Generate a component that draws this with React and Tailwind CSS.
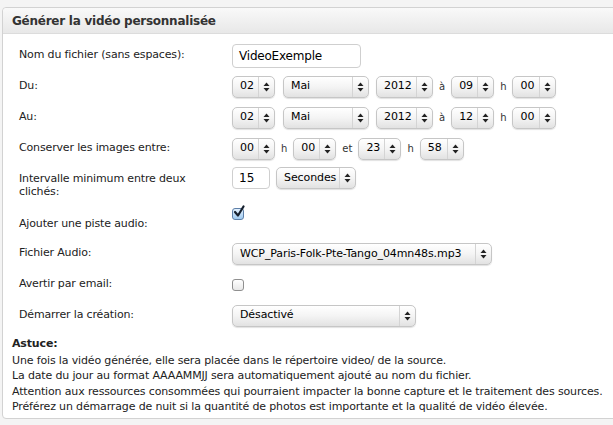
import React from 'react';

const font = { fontFamily: '"DejaVu Sans", "Lucida Grande", sans-serif' };

const Arrows = () => (
    <svg width="7" height="10" viewBox="0 0 7 10">
        <path d="M3.5 0.5 L6.5 4 L0.5 4 Z" fill="#222" />
        <path d="M3.5 9.5 L6.5 6 L0.5 6 Z" fill="#222" />
    </svg>
);

// Mac style popup select
const Select = ({ value, w }) => (
    <div
        className="inline-flex h-[22px] items-center rounded-[5px] border border-[#c6c6c6] bg-gradient-to-b from-white via-[#f4f4f4] to-[#e2e2e2] shadow-[0_1px_1px_rgba(0,0,0,0.12)] shrink-0"
        style={{ width: w }}
    >
        <span className="flex-1 overflow-hidden whitespace-nowrap pl-[7px] text-[11px] tracking-[-0.1px] text-black">{value}</span>
        <span className="flex h-full w-[16px] items-center justify-center border-l border-[#d4d4d4]">
            <Arrows />
        </span>
    </div>
);

const Sep = ({ children }) => <span className="mx-[6px] text-[10px] text-[#333]">{children}</span>;

const Row = ({ label, h, children, labelClass = '', ctrlClass = '' }) => (
    <div className={`flex ${h}`}>
        <div className={`w-[213px] shrink-0 text-[11px] tracking-[-0.15px] text-[#222] ${labelClass}`}>{label}</div>
        <div className={`flex items-center ${ctrlClass}`}>{children}</div>
    </div>
);

const Checkbox = ({ checked }) => (
    <div
        className={`relative h-[12px] w-[12px] rounded-[3px] border ${
            checked
                ? 'border-[#5d7fa8] bg-gradient-to-b from-[#e4f2ff] to-[#9fcaf0]'
                : 'border-[#8f8f8f] bg-gradient-to-b from-white to-[#e8e8e8]'
        }`}
    >
        {checked && (
            <svg width="12" height="13" viewBox="0 0 12 13" className="absolute -top-[4px] left-[0px]">
                <path d="M2 7 L5 10.5 L10.5 1.5" stroke="#16202e" strokeWidth="2.2" fill="none" strokeLinecap="round" strokeLinejoin="round" />
            </svg>
        )}
    </div>
);

export default function App() {
    return (
        <div className="min-h-[425px] w-[613px] overflow-hidden bg-[#f4f4f4] pl-[2px] pt-[7px]" style={font}>
            <div className="h-[412px] w-[640px] rounded-[4px] border border-[#d2d2d2] bg-white">
                {/* Header */}
                <div className="flex h-[26px] items-center rounded-t-[4px] border-b border-[#dcdcdc] bg-gradient-to-b from-[#f9f9f9] to-[#e8e8e8] pl-[9px]">
                    <span className="text-[12px] font-bold tracking-[-0.25px] text-[#333]">Générer la vidéo personnalisée</span>
                </div>

                <div className="pl-[16px] pt-[6px]">
                    <Row label="Nom du fichier (sans espaces):" h="h-[31px] items-center">
                        <div className="flex h-[24px] w-[129px] items-center rounded-[4px] border border-[#cfcfcf] bg-white pl-[6px] text-[12px] tracking-[-0.2px] text-black">
                            VideoExemple
                        </div>
                    </Row>
                    <Row label="Du:" h="h-[31px] items-center">
                        <Select value="02" w={43} />
                        <span className="w-[8px]" />
                        <Select value="Mai" w={86} />
                        <span className="w-[7px]" />
                        <Select value="2012" w={57} />
                        <Sep>à</Sep>
                        <Select value="09" w={43} />
                        <Sep>h</Sep>
                        <Select value="00" w={44} />
                    </Row>
                    <Row label="Au:" h="h-[31px] items-center">
                        <Select value="02" w={43} />
                        <span className="w-[8px]" />
                        <Select value="Mai" w={86} />
                        <span className="w-[7px]" />
                        <Select value="2012" w={57} />
                        <Sep>à</Sep>
                        <Select value="12" w={43} />
                        <Sep>h</Sep>
                        <Select value="00" w={44} />
                    </Row>
                    <Row label="Conserver les images entre:" h="h-[31px] items-center">
                        <Select value="00" w={43} />
                        <Sep>h</Sep>
                        <Select value="00" w={43} />
                        <Sep>et</Sep>
                        <Select value="23" w={43} />
                        <Sep>h</Sep>
                        <Select value="58" w={44} />
                    </Row>
                    <Row label={<>Intervalle minimum entre deux<br />clichés:</>} h="h-[37px] pt-[3px]" labelClass="pt-[5px] leading-[13px]" ctrlClass="items-start">
                        <div className="flex h-[22px] w-[38px] items-center rounded-[4px] border border-[#cfcfcf] bg-white pl-[6px] text-[12px] text-black">15</div>
                        <span className="w-[6px]" />
                        <Select value="Secondes" w={80} />
                    </Row>
                    <Row label="Ajouter une piste audio:" h="h-[36px] pt-[7px]" labelClass="pt-[8px]" ctrlClass="items-start">
                        <Checkbox checked />
                    </Row>
                    <Row label="Fichier Audio:" h="h-[32px] items-center">
                        <div className="mb-[5px] h-[22px]">
                            <Select value="WCP_Paris-Folk-Pte-Tango_04mn48s.mp3" w={260} />
                        </div>
                    </Row>
                    <Row label="Avertir par email:" h="h-[31px] items-center">
                        <Checkbox />
                    </Row>
                    <Row label="Démarrer la création:" h="h-[31px] items-center">
                        <Select value="Désactivé" w={184} />
                    </Row>
                </div>

                {/* Astuce */}
                <div className="pl-[9px] pt-[5px] text-[11px] leading-[15.5px] tracking-[-0.15px] text-[#222]">
                    <div className="font-bold">Astuce:</div>
                    <div className="pt-[1px]">Une fois la vidéo générée, elle sera placée dans le répertoire video/ de la source.</div>
                    <div>La date du jour au format AAAAMMJJ sera automatiquement ajouté au nom du fichier.</div>
                    <div>Attention aux ressources consommées qui pourraient impacter la bonne capture et le traitement des sources.</div>
                    <div>Préférez un démarrage de nuit si la quantité de photos est importante et la qualité de vidéo élevée.</div>
                </div>
            </div>
        </div>
    );
}
